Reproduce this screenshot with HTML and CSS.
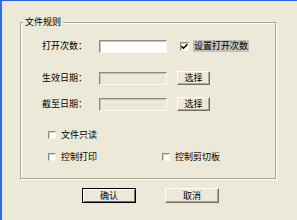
FILE: index.html
```html
<!DOCTYPE html>
<html lang="zh-CN">
<head>
<meta charset="utf-8">
<title>文件规则</title>
<link rel="stylesheet" href="styles.css">
</head>
<body>
<div class="window">
  <div class="group">
    <span class="group-title">文件规则</span>
    <div class="row row1">
      <span class="label">打开次数：</span>
      <span class="input"></span>
      <span class="check first-check">
        <span class="box checked">
          <svg width="7" height="7" viewBox="0 0 7 7"><path d="M0.5 3.2 L2.5 5.2 L6.5 1.2" fill="none" stroke="#000" stroke-width="1.6"/></svg>
        </span>
        <span class="focus">设置打开次数</span>
      </span>
    </div>
    <div class="row row2">
      <span class="label">生效日期：</span>
      <span class="input disabled"></span>
      <span class="btn small">选择</span>
    </div>
    <div class="row row3">
      <span class="label">截至日期：</span>
      <span class="input disabled"></span>
      <span class="btn small">选择</span>
    </div>
    <div class="checkrow cr1">
      <span class="check item"><span class="box"></span><span>文件只读</span></span>
    </div>
    <div class="checkrow cr2">
      <span class="check item"><span class="box"></span><span>控制打印</span></span>
      <span class="check"><span class="box"></span><span>控制剪切板</span></span>
    </div>
  </div>
  <div class="actions">
    <span class="btn wide default">确认</span>
    <span class="btn wide">取消</span>
  </div>
</div>
</body>
</html>
```

FILE: styles.css
```css
html, body {
  margin: 0;
  padding: 0;
  background: #ECE9D8;
}
body {
  font-family: "Noto Sans CJK SC", "Noto Sans CJK TC", sans-serif;
  font-size: 9px;
  line-height: 12px;
  color: #000;
}
.window {
  box-sizing: border-box;
  width: 297px;
  height: 220px;
  border-top: 1px solid #2f62d8;
  border-left: 2px solid #3a6bd8;
  box-shadow: inset 0 1px 0 #dde4f4, inset 1px 0 0 #dde4f4;
  overflow: hidden;
}
.group {
  position: relative;
  box-sizing: border-box;
  margin: 21px 0 0 18px;
  width: 256px;
  height: 157px;
  border: 1px solid #ACA899;
  box-shadow: inset 1px 1px 0 #fff, 1px 1px 0 #fff;
  padding-top: 16px;
}
.group-title {
  position: absolute;
  left: 2px;
  top: -7px;
  padding: 0 2px;
  background: #ECE9D8;
  line-height: 12px;
}
.row {
  display: flex;
  align-items: center;
  height: 14px;
}
.row2 { margin-top: 18px; }
.row3 { margin-top: 12px; }
.label {
  width: 66px;
  text-align: right;
  white-space: nowrap;
}
.input {
  box-sizing: border-box;
  margin-left: 12px;
  width: 68px;
  height: 13px;
  background: #fff;
  border-style: solid;
  border-width: 1px;
  border-color: #8d8b80 #fafaf6 #fafaf6 #8d8b80;
  box-shadow: inset 1px 1px 0 #c8c5b6;
}
.input.disabled {
  background: #ECE9D8;
}
.btn {
  box-sizing: border-box;
  display: flex;
  align-items: center;
  justify-content: center;
  background: #ECE9D8;
  border-style: solid;
  border-width: 1px;
  border-color: #fff #716F64 #716F64 #fff;
  box-shadow: inset -1px -1px 0 #ACA899;
  white-space: nowrap;
}
.btn.small {
  margin-left: 10px;
  width: 33px;
  height: 14px;
}
.check {
  display: flex;
  align-items: center;
  white-space: nowrap;
}
.first-check {
  margin-left: 13px;
}
.box {
  box-sizing: border-box;
  display: flex;
  align-items: center;
  justify-content: center;
  width: 8px;
  height: 8px;
  margin-right: 5px;
  background: #fff;
  border-style: solid;
  border-width: 1px;
  border-color: #8d8b80 #f4f3ee #f4f3ee #8d8b80;
  box-shadow: inset 1px 1px 0 #d4d0c8;
}
.box.checked {
  width: 9px;
  height: 9px;
  margin-right: 4px;
}
.box svg {
  display: block;
}
.focus {
  background: #c2c0b8;
  padding: 0 1px;
}
.checkrow {
  display: flex;
  align-items: center;
  height: 10px;
  padding-left: 27px;
}
.cr1 { margin-top: 19px; }
.cr2 { margin-top: 12px; }
.item {
  width: 114px;
}
.actions {
  display: flex;
  gap: 29px;
  margin-top: 9px;
  padding-left: 80px;
}
.btn.wide {
  width: 54px;
  height: 15px;
}
.btn.default {
  border: 1px solid #000;
  box-shadow: inset 1px 1px 0 #fff, inset -1px -1px 0 #716F64;
}
```
